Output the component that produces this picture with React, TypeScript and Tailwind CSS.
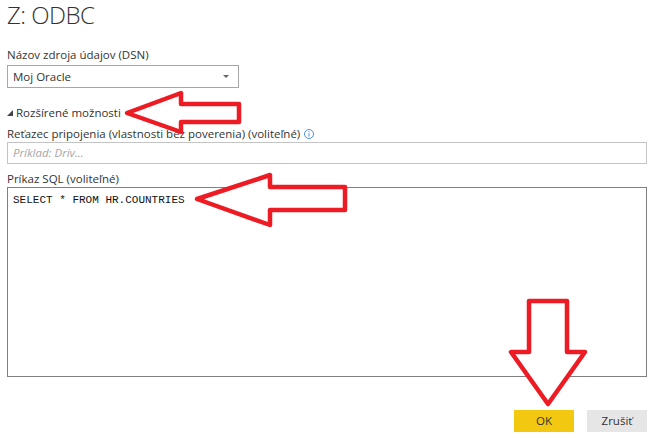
const font = "font-['Open_Sans','Noto_Sans',sans-serif]";

const Arrows = () => (
  <svg width="653" height="438" className="absolute top-0 left-0" fill="white" stroke="#ed1c24" strokeWidth="4.5" strokeLinejoin="round">
    <path d="M127 113 L181 93 L181 104 L239 104 L239 122 L181 122 L181 132 Z" />
    <path d="M197 199 L270 175 L270 187 L345 187 L345 210 L270 210 L270 225 Z" />
    <path d="M529 301 L567 301 L567 352 L585 352 L548 404 L511 352 L529 352 Z" />
  </svg>
);

export default function App() {
  return (
    <div className={`relative w-[653px] h-[438px] overflow-hidden bg-white text-[#333] ${font}`}>
      <div className="flex flex-col pl-[7px] pr-[6px] h-full">
        <h1 className="text-[24px] leading-[30px] font-light tracking-[-0.5px] text-[#333]">Z: ODBC</h1>
        <label className="mt-[16px] text-[11.5px] leading-[17px]">Názov zdroja údajov (DSN)</label>
        <div className="mt-[2px] flex items-center justify-between w-[232px] h-[23px] border border-[#a6a6a6] pl-[5px] pr-[9px] text-[11.5px]">
          <span>Moj Oracle</span>
          <span className="w-0 h-0 border-x-[3px] border-x-transparent border-t-[3px] border-t-[#666]" />
        </div>
        <div className="mt-[16px] flex items-center gap-[3px] text-[11.5px] leading-[17px]">
          <span className="w-0 h-0 border-l-[6px] border-l-transparent border-b-[6px] border-b-[#444]" />
          <span>Rozšírené možnosti</span>
        </div>
        <div className="mt-[4px] flex items-center gap-[4px] text-[11.5px] leading-[17px]">
          <span>Reťazec pripojenia (vlastnosti bez poverenia) (voliteľné)</span>
          <svg width="10" height="10" viewBox="0 0 10 10" fill="none" stroke="#4a90d9">
            <circle cx="5" cy="5" r="4.5" />
            <path d="M5 4.2V7.6M5 2.2V3.2" />
          </svg>
        </div>
        <div className="h-[22px] border border-[#c4c4c4] flex items-center pl-[5px] text-[11.5px] italic text-[#a6a6a6]">
          Príklad: Driv...
        </div>
        <label className="mt-[6px] text-[11.5px] leading-[17px]">Príkaz SQL (voliteľné)</label>
        <div className="h-[190px] border border-[#808080] pl-[5px] pt-[5px] font-['Liberation_Mono',monospace] text-[11px] leading-[14px] text-[#111]">
          SELECT * FROM HR.COUNTRIES
        </div>
        <div className="mt-[33px] flex justify-end gap-[13px]">
          <button className="w-[60px] h-[22px] bg-[#f2c811] text-[11.5px] text-[#333]">OK</button>
          <button className="w-[60px] h-[22px] bg-[#e6e6e6] text-[11.5px] text-[#333]">Zrušiť</button>
        </div>
      </div>
      <Arrows />
    </div>
  );
}
